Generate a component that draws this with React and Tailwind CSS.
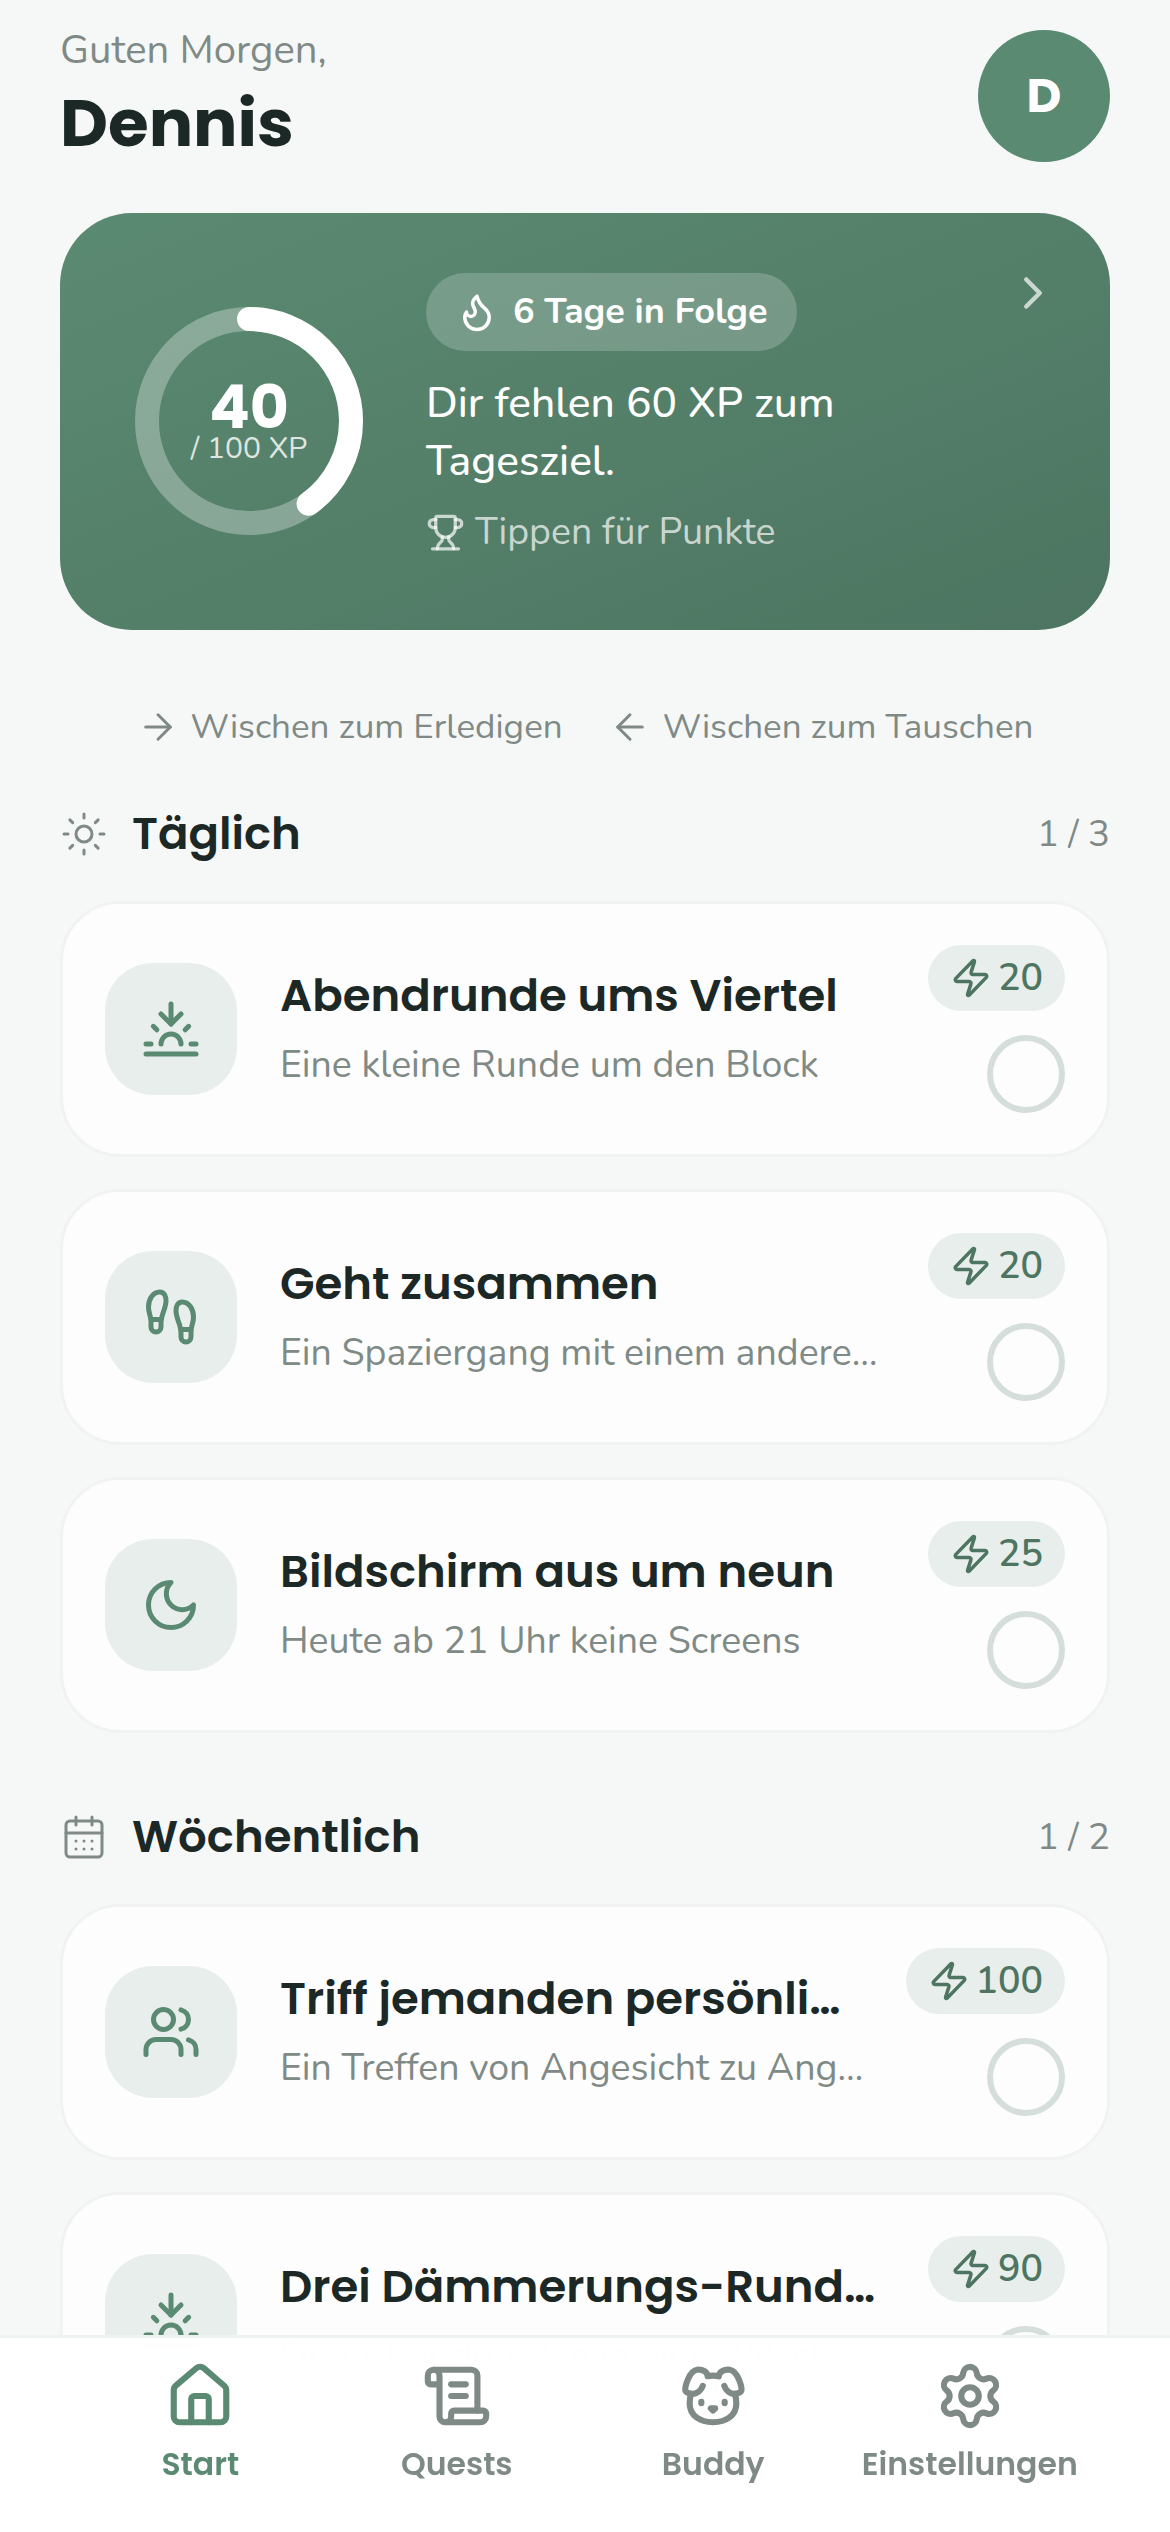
import React from "react";
import {
  ArrowLeft,
  ArrowRight,
  CalendarDays,
  ChevronRight,
  Dog,
  Flame,
  Footprints,
  House,
  ScrollText,
  Settings,
  Sun,
  Sunset,
  Trophy,
  Users,
  Zap,
} from "lucide-react";

const body = "font-['Nunito','Noto_Sans',sans-serif]";
const head = "font-['Poppins','Inter',sans-serif]";

function MoonIcon({ size, strokeWidth, className }) {
  return (
    <svg width={size} height={size} viewBox="0 0 24 24" fill="none" stroke="currentColor" strokeWidth={strokeWidth} strokeLinecap="round" strokeLinejoin="round" className={className}>
      <path d="M12 3a6 6 0 0 0 9 9 9 9 0 1 1-9-9Z" />
    </svg>
  );
}

const daily = [
  { icon: Sunset, title: "Abendrunde ums Viertel", sub: "Eine kleine Runde um den Block", xp: 20 },
  { icon: Footprints, title: "Geht zusammen", sub: "Ein Spaziergang mit einem anderen Paar", xp: 20 },
  { icon: MoonIcon, title: "Bildschirm aus um neun", sub: "Heute ab 21 Uhr keine Screens", xp: 25 },
];

const weekly = [
  { icon: Users, title: "Triff jemanden persönlich", sub: "Ein Treffen von Angesicht zu Angesicht", xp: 100 },
  { icon: Sunset, title: "Drei Dämmerungs-Runden diese Woche", sub: "Drei Abendrunden in einer Woche", xp: 90 },
];

const tabs = [
  { icon: House, label: "Start", active: true },
  { icon: ScrollText, label: "Quests" },
  { icon: Dog, label: "Buddy" },
  { icon: Settings, label: "Einstellungen" },
];

function QuestCard({ quest }) {
  const Icon = quest.icon;
  return (
    <div className="flex h-[256px] items-start rounded-[60px] border-[3px] border-[#f0f3f2] bg-[#fdfdfd] pl-[42px] pr-[42px]">
      <div className="mt-[59px] flex h-[132px] w-[132px] shrink-0 items-center justify-center rounded-[48px] bg-[#e8eeeb]">
        <Icon size={60} strokeWidth={2} className="text-[#5b8a72]" />
      </div>
      <div className="ml-[43px] mt-[59px] min-w-0 flex-1">
        <div className={`${head} truncate text-[45px] leading-[66px] font-semibold text-[#1c2826]`}>
          {quest.title}
        </div>
        <div className={`${body} mt-[9px] truncate text-[37.5px] leading-[54px] text-[#7f8a86]`}>{quest.sub}</div>
      </div>
      <div className="ml-[42px] mt-[41px] flex shrink-0 flex-col items-end gap-[24px]">
        <div className="flex h-[66px] items-center gap-[6px] rounded-full bg-[#e8eeeb] px-[22px]">
          <Zap size={42} strokeWidth={2} className="text-[#4d7561]" />
          <span className={`${body} text-[37.5px] font-semibold text-[#4d7561]`}>{quest.xp}</span>
        </div>
        <div className="h-[78px] w-[78px] rounded-full border-[6px] border-[#d5dedb]" />
      </div>
    </div>
  );
}

function Section({ icon: Icon, title, count, quests }) {
  return (
    <section>
      <div className="flex h-[60px] items-center justify-between">
        <div className="flex items-center gap-[24px]">
          <Icon size={48} strokeWidth={1.5} className="text-[#7f8a86]" />
          <h2 className={`${head} text-[45px] font-semibold text-[#1c2826]`}>{title}</h2>
        </div>
        <span className={`${body} text-[36.5px] text-[#7f8a86]`}>{count}</span>
      </div>
      <div className="mt-[37px] flex flex-col gap-[32px]">
        {quests.map((q) => (
          <QuestCard key={q.title} quest={q} />
        ))}
      </div>
    </section>
  );
}

function Ring() {
  const r = 102;
  const c = 2 * Math.PI * r;
  return (
    <div className="relative -mt-[2px] h-[228px] w-[228px] shrink-0">
      <svg width="228" height="228" viewBox="0 0 228 228" className="-rotate-90">
        <circle cx="114" cy="114" r={r} fill="none" stroke="#ffffff" strokeOpacity="0.3" strokeWidth="24" />
        <circle
          cx="114"
          cy="114"
          r={r}
          fill="none"
          stroke="#ffffff"
          strokeWidth="24"
          strokeLinecap="round"
          strokeDasharray={`${c * 0.4} ${c}`}
        />
      </svg>
      <div className="absolute inset-0 flex flex-col items-center justify-center">
        <span className={`${head} text-[60px] leading-[60px] font-bold text-white`}>40</span>
        <span className={`${body} -mt-[3px] text-[30px] leading-[30px] text-white/80`}>/ 100 XP</span>
      </div>
    </div>
  );
}

export default function App() {
  return (
    <div className={`${body} relative h-[2532px] w-[1170px] overflow-hidden bg-[#f6f8f7]`}>
      <div className="px-[60px]">
        <header className="flex h-[162px] justify-between pt-[27px]">
          <div>
            <div className="text-[40px] leading-[46px] text-[#7f8a86]">Guten Morgen,</div>
            <h1 className={`${head} mt-[8px] text-[66px] leading-[84px] font-bold text-[#1c2826]`}>Dennis</h1>
          </div>
          <div className={`${head} mt-[3px] flex h-[132px] w-[132px] items-center justify-center rounded-full bg-[#5b8a72] text-[48px] font-bold text-white`}>
            D
          </div>
        </header>

        <div className="relative mt-[51px] flex h-[417px] items-center rounded-[72px] bg-gradient-to-br from-[#5b8a72] to-[#4d7561] pl-[75px]">
          <Ring />
          <div className="ml-[63px] self-start pt-[60px]">
            <div className="flex h-[78px] w-fit items-center gap-[15px] rounded-full bg-white/20 px-[30px]">
              <Flame size={42} strokeWidth={2} className="text-white" />
              <span className="text-[36px] font-bold text-white">6 Tage in Folge</span>
            </div>
            <p className="mt-[23px] w-[520px] text-[42.5px] leading-[58px] font-medium text-white">
              Dir fehlen 60 XP zum Tagesziel.
            </p>
            <div className="mt-[14px] flex items-center gap-[10px] text-[37.5px] text-white/70">
              <Trophy size={39} strokeWidth={2} />
              <span>Tippen für Punkte</span>
            </div>
          </div>
          <ChevronRight size={54} strokeWidth={2} className="absolute right-[50px] top-[53px] text-white/70" />
        </div>

        <div className="mt-[73px] flex h-[48px] items-center justify-center gap-[46px] text-[35px] text-[#7f8a86]">
          <span className="flex items-center gap-[12px]">
            <ArrowRight size={42} strokeWidth={1.75} />
            Wischen zum Erledigen
          </span>
          <span className="flex items-center gap-[12px]">
            <ArrowLeft size={42} strokeWidth={1.75} />
            Wischen zum Tauschen
          </span>
        </div>

        <div className="mt-[53px] flex flex-col gap-[74px]">
          <Section icon={Sun} title="Täglich" count="1 / 3" quests={daily} />
          <Section icon={CalendarDays} title="Wöchentlich" count="1 / 2" quests={weekly} />
        </div>
      </div>

      <nav className="absolute inset-x-0 bottom-0 flex h-[197px] border-t-[3px] border-[#eef3f1] bg-white/[0.97] px-[72px] pt-[23px] backdrop-blur-xl">
        {tabs.map((t) => {
          const Icon = t.icon;
          return (
            <div key={t.label} className={`flex flex-1 flex-col items-center gap-[10px] ${t.active ? "text-[#5b8a72]" : "text-[#7f8a86]"}`}>
              <Icon size={70} strokeWidth={2.1} />
              <span className={`${head} text-[31.5px] leading-[46px] font-semibold`}>{t.label}</span>
            </div>
          );
        })}
      </nav>
    </div>
  );
}
